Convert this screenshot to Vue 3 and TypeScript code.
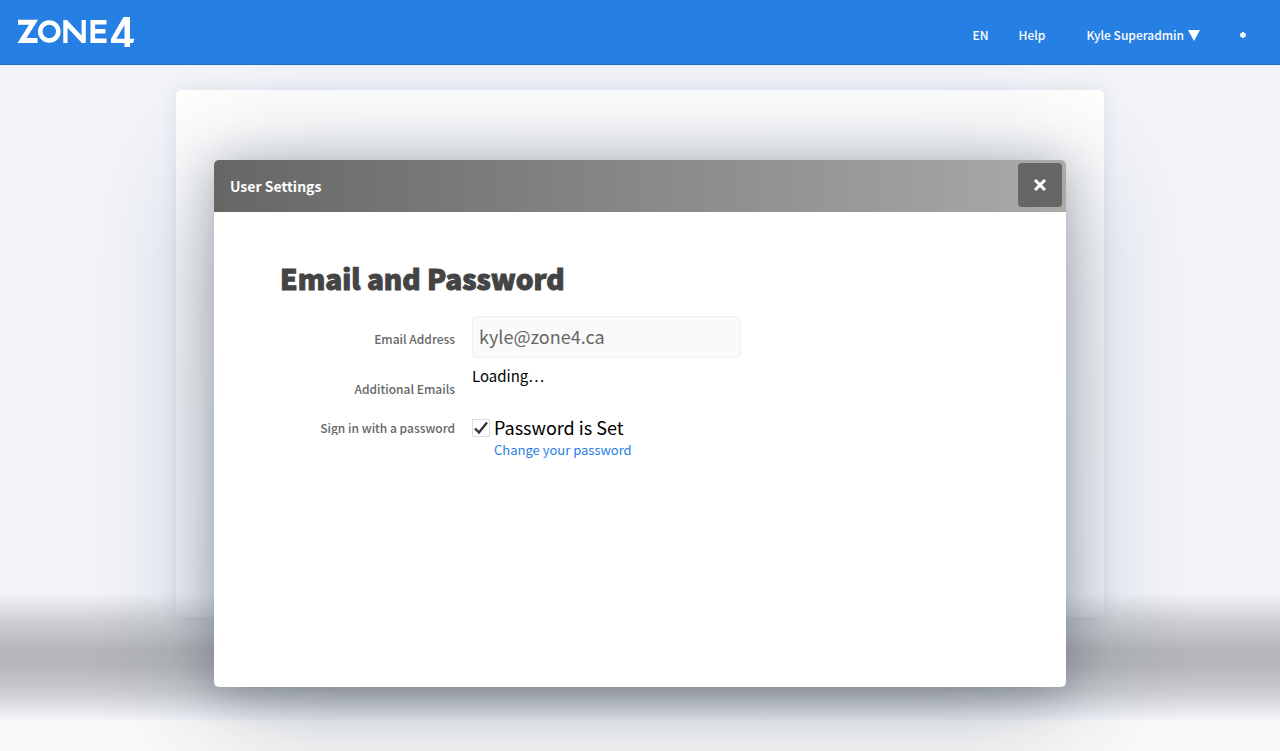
<script setup lang="ts">
import { ref } from 'vue'

const email = ref('kyle@zone4.ca')
const passwordSet = ref(true)
const open = ref(true)
</script>

<template>
  <div class="page">
    <header class="topbar">
      <a class="logo" href="#" aria-label="Zone4">
        <svg width="118" height="32" viewBox="0 0 118 32" fill="none" stroke="#fff" stroke-width="5">
          <path d="M1 6.3H16.5L5 24.5H20.5" stroke-linejoin="miter" />
          <circle cx="32.3" cy="15.5" r="9" stroke-width="4.6" />
          <path d="M46.3 27V4H50L64.6 19.5V4H68.8V27H64.9L50.6 11.8V27Z" fill="#fff" stroke="none" />
          <path d="M89.5 6.3H75.8V24.7H89.5M75.8 15.2H88.5" stroke-width="4.6" />
          <path fill="#fff" fill-rule="evenodd" stroke="none" d="M106.5 1H113V22.8H117.5L116 27H113V31H107.5V27H94V22.8ZM107.5 9L99.3 22.8H107.5Z" />
        </svg>
      </a>
      <nav class="nav">
        <a class="lang" href="#">EN</a>
        <a class="help" href="#">Help</a>
        <button class="user" type="button">
          Kyle Superadmin
          <svg width="12" height="11" viewBox="0 0 12 11" fill="#fff"><path d="M0 0H12L6 11Z" /></svg>
        </button>
        <button class="star" type="button" aria-label="Options">
          <svg width="6" height="6" viewBox="0 0 6 6" stroke="#fff" stroke-width="2"><path d="M3 0V6M0.4 1.5L5.6 4.5M0.4 4.5L5.6 1.5" /></svg>
        </button>
      </nav>
    </header>
    <main class="main">
      <section class="card"></section>
    </main>
    <div class="fade"></div>
    <footer class="footer"></footer>

    <div v-if="open" class="overlay">
      <section class="dialog" role="dialog" aria-labelledby="dialog-title">
        <div class="dialog-head">
          <h2 id="dialog-title">User Settings</h2>
          <button class="close" type="button" aria-label="Close" @click="open = false">
            <svg width="12" height="12" viewBox="0 0 12 12" stroke="#fff" stroke-width="3"><path d="M1 1L11 11M11 1L1 11" /></svg>
          </button>
        </div>
        <form class="body" @submit.prevent>
          <h1>Email and Password</h1>
          <div class="row email-row">
            <label class="label" for="email">Email Address</label>
            <input id="email" v-model="email" class="email" type="email" disabled />
          </div>
          <div class="row extra-row">
            <span class="label">Additional Emails</span>
            <span class="loading">Loading…</span>
          </div>
          <div class="row password-row">
            <span class="label clipped">Sign in with a password</span>
            <div class="password">
              <label class="check">
                <input v-model="passwordSet" type="checkbox" />
                <svg class="tick" width="14" height="14" viewBox="0 0 14 14" fill="none" stroke="#333" stroke-width="2.4"><path d="M1 7.5L5 11.5L13 1.5" /></svg>
                <span class="check-text">Password is Set</span>
              </label>
              <a class="change" href="#">Change your password</a>
            </div>
          </div>
        </form>
      </section>
    </div>
  </div>
</template>

<style>
body {
  margin: 0;
  background: #fafafa;
}
</style>

<style scoped>
.page {
  position: relative;
  display: flex;
  flex-direction: column;
  min-height: 100vh;
  box-sizing: border-box;
  overflow: hidden;
  font-family: "Noto Sans CJK SC", "Noto Sans", sans-serif;
  background: #f2f4f9;
}
.topbar {
  display: flex;
  justify-content: space-between;
  align-items: center;
  height: 64px;
  padding: 0 34px 0 17px;
  background: #2680e4;
  border-bottom: 1px solid #1f6dc4;
}
.logo {
  display: flex;
}
.nav {
  display: flex;
  align-items: center;
  padding-top: 6px;
  font-size: 12px;
  font-weight: 500;
  line-height: 18px;
}
.nav a,
.nav button {
  color: #fff;
  text-decoration: none;
}
.nav button {
  display: flex;
  align-items: center;
  padding: 0;
  border: 0;
  background: none;
  font: inherit;
}
.help {
  margin-left: 30px;
}
.user {
  gap: 4px;
  margin-left: 41px;
}
.star {
  margin-left: 40px;
}
.main {
  flex: 1;
  padding: 25px 16px 0;
}
.card {
  box-sizing: border-box;
  max-width: 928px;
  height: 527px;
  margin: 0 auto -24px;
  border-radius: 5px;
  background: linear-gradient(#fff, #f8f9fb 40%, #f4f6fa);
  box-shadow: 0 0 16px rgba(50, 70, 120, 0.1);
}
.fade {
  position: relative;
  height: 127px;
  background: linear-gradient(rgba(0, 0, 0, 0), rgba(0, 0, 0, 0.15) 22%, rgba(0, 0, 0, 0.26) 46%, rgba(0, 0, 0, 0.25) 58%, rgba(0, 0, 0, 0.16) 78%, rgba(0, 0, 0, 0));
}
.footer {
  position: relative;
  height: 31px;
  background: #fafafa;
}
.overlay {
  position: absolute;
  inset: 0;
  display: flex;
  justify-content: center;
  padding: 160px 16px 64px;
}
.dialog {
  width: 100%;
  max-width: 852px;
  border-radius: 5px;
  background: #fff;
  box-shadow: 0 4px 40px rgba(20, 30, 40, 0.24), 0 15px 120px rgba(20, 45, 70, 0.32);
}
.dialog-head {
  display: flex;
  align-items: flex-start;
  justify-content: space-between;
  height: 52px;
  padding: 3px 4px 0 16px;
  box-sizing: border-box;
  border-radius: 5px 5px 0 0;
  background: linear-gradient(90deg, #666, #aaa);
}
h2 {
  margin: 0;
  color: #fff;
  font-size: 14px;
  font-weight: 700;
  line-height: 46px;
}
.close {
  display: flex;
  align-items: center;
  justify-content: center;
  width: 44px;
  height: 44px;
  padding: 0;
  border: 0;
  border-radius: 4px;
  background: #666;
}
.body {
  padding: 44px 66px;
}
h1 {
  margin: 0 0 16px;
  color: #444;
  font-size: 28px;
  font-weight: 900;
  line-height: 44px;
  -webkit-text-stroke: 1px #444;
}
.row {
  display: grid;
  grid-template-columns: 175px 1fr;
  column-gap: 17px;
}
.label {
  color: #666;
  font-size: 12px;
  font-weight: 500;
  line-height: 18px;
  text-align: right;
}
.email-row {
  align-items: center;
}
.email-row .label {
  padding-top: 4px;
}
.email {
  box-sizing: border-box;
  width: 100%;
  max-width: 269px;
  height: 42px;
  padding: 0 6px 2px;
  border: 1px solid #f0f1f7;
  border-radius: 4px;
  background: #fafafa;
  color: #666;
  font: 18px "Noto Sans CJK SC", "Noto Sans", sans-serif;
}
.extra-row {
  padding-top: 8px;
  height: 44px;
}
.extra-row .label {
  padding-top: 14px;
}
.loading {
  color: #000;
  font-size: 15px;
  line-height: 20px;
}
.password-row {
  padding-top: 4px;
}
.clipped {
  height: 16px;
  overflow: hidden;
  margin-top: 5px;
}
.password {
  padding-top: 2px;
}
.check {
  display: grid;
  grid-template-columns: 18px 1fr;
  align-items: center;
  column-gap: 4px;
  color: #000;
  font-size: 18px;
  line-height: 22px;
}
.check-text {
  padding-bottom: 2px;
}
.check input,
.tick {
  grid-column: 1;
  grid-row: 1;
}
.check input {
  appearance: none;
  width: 18px;
  height: 18px;
  margin: 0;
  border: 1px solid #ddd;
  background: #fff;
}
.tick {
  justify-self: center;
  pointer-events: none;
  visibility: hidden;
}
.check input:checked + .tick {
  visibility: visible;
}
.change {
  display: block;
  width: fit-content;
  margin-left: 22px;
  color: #2680e4;
  font-size: 13px;
  line-height: 20px;
  text-decoration: none;
}
</style>
